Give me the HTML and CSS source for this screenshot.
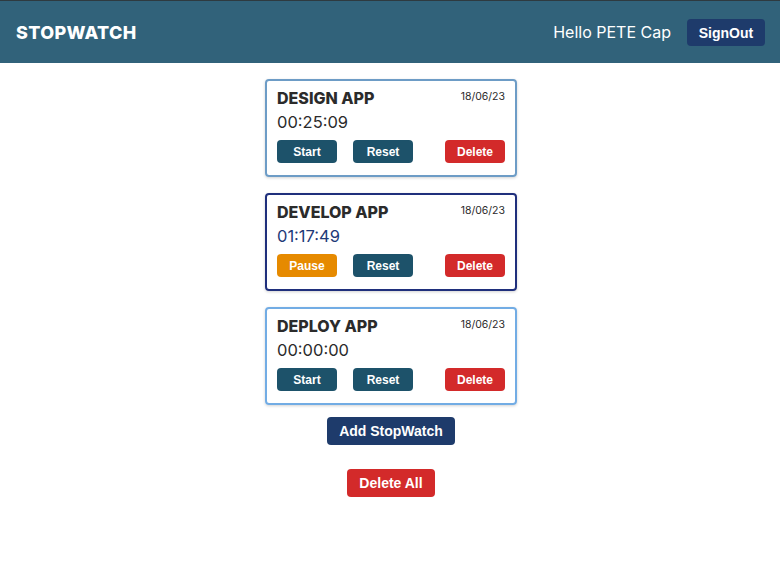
FILE: index.html
```html
<!DOCTYPE html>
<html lang="en">
<head>
<meta charset="utf-8">
<title>StopWatch</title>
<link rel="stylesheet" href="styles.css">
</head>
<body>
<header class="topbar">
  <div class="brand">STOPWATCH</div>
  <div class="user">
    <span class="hello">Hello PETE Cap</span>
    <button class="btn btn-navy signout">SignOut</button>
  </div>
</header>
<main class="main">
  <div class="card card-idle">
    <div class="card-head">
      <span class="title">DESIGN APP</span>
      <span class="date">18/06/23</span>
    </div>
    <div class="time">00:25:09</div>
    <div class="actions">
      <button class="btn btn-teal">Start</button>
      <button class="btn btn-teal">Reset</button>
      <button class="btn btn-red push">Delete</button>
    </div>
  </div>
  <div class="card card-active">
    <div class="card-head">
      <span class="title">DEVELOP APP</span>
      <span class="date">18/06/23</span>
    </div>
    <div class="time time-active">01:17:49</div>
    <div class="actions">
      <button class="btn btn-orange">Pause</button>
      <button class="btn btn-teal">Reset</button>
      <button class="btn btn-red push">Delete</button>
    </div>
  </div>
  <div class="card card-new">
    <div class="card-head">
      <span class="title">DEPLOY APP</span>
      <span class="date">18/06/23</span>
    </div>
    <div class="time">00:00:00</div>
    <div class="actions">
      <button class="btn btn-teal">Start</button>
      <button class="btn btn-teal">Reset</button>
      <button class="btn btn-red push">Delete</button>
    </div>
  </div>
  <button class="btn btn-navy big add">Add StopWatch</button>
  <button class="btn btn-red big delall">Delete All</button>
</main>
</body>
</html>
```
FILE: styles.css
```css
* { box-sizing: border-box; }
html, body { margin: 0; padding: 0; background: #fff; }
body { font-family: "Inter", "Noto Sans", sans-serif; color: #2b2b2b; }

.topbar {
  height: 63px;
  background: #31627a;
  border-top: 1px solid #2e3a40;
  display: flex;
  align-items: center;
  justify-content: space-between;
  padding: 0 15px 0 16px;
}
.brand {
  color: #fff;
  font-weight: 800;
  font-size: 18px;
  letter-spacing: 0.35px;
}
.user { display: flex; align-items: center; gap: 16px; }
.hello { color: #fff; font-size: 16px; }

.btn {
  font-family: "Liberation Sans", Arial, sans-serif;
  font-weight: bold;
  color: #fff;
  border: none;
  border-radius: 4px;
  font-size: 12px;
  width: 60px;
  height: 23px;
  padding: 0;
  cursor: pointer;
}
.btn-teal { background: #1d526a; }
.btn-red { background: #d32a2a; }
.btn-orange { background: #e68a00; }
.btn-navy { background: #1e3b6b; }
.signout { width: 78px; height: 27px; font-size: 14px; margin-top: 1px; }

.main {
  display: flex;
  flex-direction: column;
  align-items: center;
  padding-top: 16px;
  padding-left: 2px;
}
.card {
  width: 252px;
  border: 2px solid #6d9cc6;
  border-radius: 4px;
  padding: 6px 10px 11px 10px;
  box-shadow: 0 1px 3px rgba(0,0,0,0.18);
  margin-bottom: 16px;
}
.card-active { border-color: #1f2f7c; }
.card-new { border-color: #72ace4; margin-bottom: 12px; }
.card-head {
  display: flex;
  justify-content: space-between;
  align-items: flex-start;
}
.title { font-weight: 800; font-size: 16px; line-height: 22px; color: #2b2b2b; }
.date { font-size: 10.5px; line-height: 16px; color: #2b2b2b; margin-top: 2px; }
.time { font-size: 16.5px; line-height: 24px; margin-top: 1px; color: #2b2b2b; }
.time-active { color: #1e3a78; }
.actions { display: flex; gap: 16px; margin-top: 6px; margin-bottom: 1px; }
.push { margin-left: auto; }

.big { width: auto; height: 28px; font-size: 14px; padding: 0 12px; }
.add { margin-bottom: 24px; }
```
